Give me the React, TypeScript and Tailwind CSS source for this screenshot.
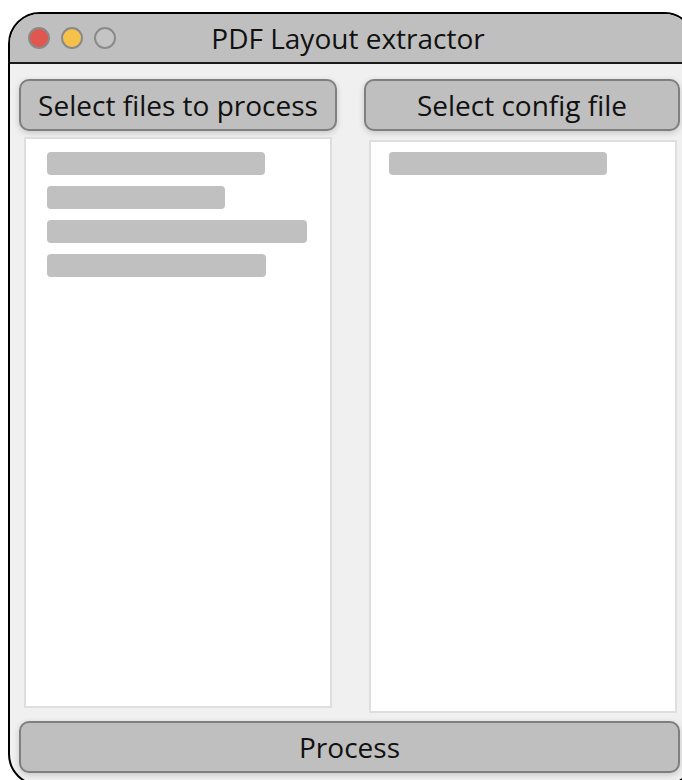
import React from 'react'

// Placeholder rows shown inside the file lists
const fileRows = [218, 178, 260, 219]
const configRows = [218]

const TrafficLights = () => (
  <div className="flex items-center gap-[11px]">
    <span className="block w-[22px] h-[22px] rounded-full bg-[#e0574f] border-2 border-[#8a8a8a]"></span>
    <span className="block w-[22px] h-[22px] rounded-full bg-[#f5c14b] border-2 border-[#8a8a8a]"></span>
    <span className="block w-[22px] h-[22px] rounded-full bg-[#c4c4c4] border-2 border-[#8a8a8a]"></span>
  </div>
)

const ActionButton = ({ label, className = '' }: { label: string; className?: string }) => (
  <button
    className={`flex items-center justify-center rounded-[10px] border-2 border-[#7f7f7f] bg-[#bfbfbf] text-[#111] shadow-[0_2px_6px_rgba(0,0,0,0.18)] ${className}`}
  >
    {label}
  </button>
)

const ListPanel = ({ rows, className = '' }: { rows: number[]; className?: string }) => (
  <div className={`bg-white border-2 border-[#dedede] flex flex-col gap-[11px] ${className}`}>
    {rows.map((w, i) => (
      <div key={i} className="h-[23px] rounded-[4px] bg-[#c0c0c0]" style={{ width: w }}></div>
    ))}
  </div>
)

export default function App() {
  return (
    <div
      className="w-[682px] h-[780px] overflow-hidden bg-white pt-[12px] pl-[8px]"
      style={{ fontFamily: '"Open Sans", "Liberation Sans", sans-serif' }}
    >
      <div className="w-[688px] h-[774px] rounded-[32px] border-2 border-black bg-[#f0f0f0] overflow-hidden flex flex-col">
        {/* Title bar */}
        <div className="relative h-[50px] shrink-0 bg-[#bfbfbf] border-b-2 border-[#1a1a1a] flex items-center pl-[18px]">
          <TrafficLights />
          <div className="absolute left-0 w-[676px] top-0 bottom-0 flex items-center justify-center text-[28px] text-[#111]">
            PDF Layout extractor
          </div>
        </div>

        {/* Body */}
        <div className="flex flex-col pt-[15px] pl-[9px] w-[672px]">
          <div className="grid grid-cols-[318px_316px] gap-[27px]">
            <div className="flex flex-col">
              <ActionButton label="Select files to process" className="h-[52px] text-[28px]" />
              <ListPanel rows={fileRows} className="mt-[6px] mx-[5px] h-[571px] pt-[13px] pl-[21px]" />
            </div>
            <div className="flex flex-col">
              <ActionButton label="Select config file" className="h-[52px] text-[28px]" />
              <ListPanel rows={configRows} className="mt-[9px] ml-[5px] mr-[3px] h-[573px] pt-[10px] pl-[18px]" />
            </div>
          </div>
          <ActionButton label="Process" className="mt-[8px] h-[52px] w-[661px] text-[28px]" />
        </div>
      </div>
    </div>
  )
}
